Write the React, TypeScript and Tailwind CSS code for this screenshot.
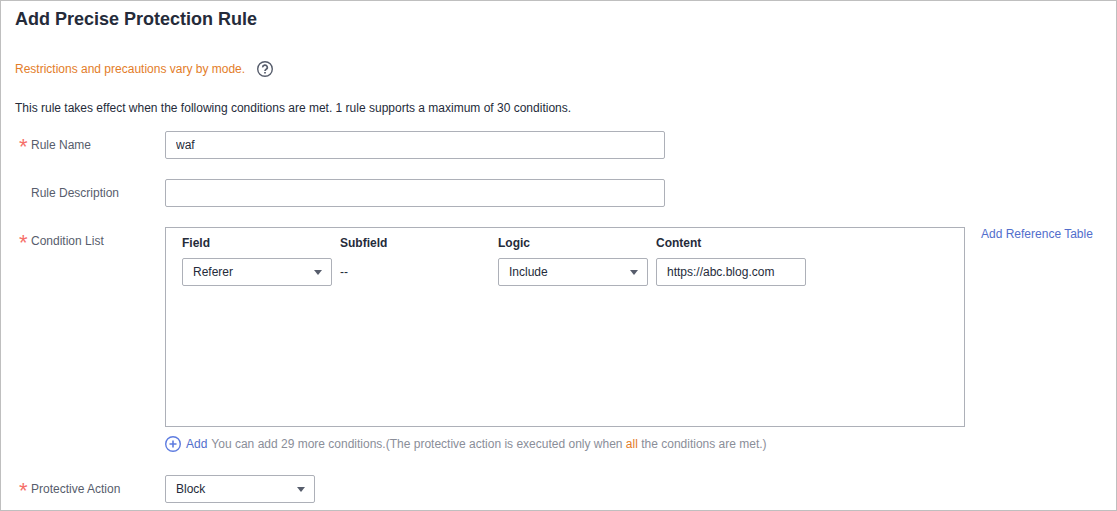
import { useState } from "react";
import type { ReactNode } from "react";

const inputClass =
    "block h-7 w-full rounded-xs border border-[#adb0b8] bg-white px-[10px] text-xs text-[#252b3a] outline-none focus:border-[#526ecc]";

function Row({ label, htmlFor, required, children }: { label: string; htmlFor: string; required?: boolean; children: ReactNode }) {
    return (
        <div className="flex items-start">
            <div className="flex h-7 w-[150px] shrink-0 pl-1 text-[#575d6c]">
                <span className="w-3 text-[22px] leading-8 text-[#f66f6a]">{required ? "*" : ""}</span>
                <label htmlFor={htmlFor} className="leading-7">{label}</label>
            </div>
            {children}
        </div>
    );
}

function Select({ id, label, value, options, onChange }: { id: string; label?: string; value: string; options: string[]; onChange: (v: string) => void }) {
    return (
        <div className="relative w-[150px]">
            <select
                id={id}
                aria-label={label}
                value={value}
                onChange={(e) => onChange(e.target.value)}
                className={`${inputClass} appearance-none`}
            >
                {options.map((o) => (
                    <option key={o}>{o}</option>
                ))}
            </select>
            <svg className="pointer-events-none absolute top-3 right-[10px] h-[5px] w-2" viewBox="0 0 8 5">
                <path d="M0 0h8L4 5z" fill="#575d6c" />
            </svg>
        </div>
    );
}

export default function App() {
    const [name, setName] = useState("waf");
    const [description, setDescription] = useState("");
    const [field, setField] = useState("Referer");
    const [logic, setLogic] = useState("Include");
    const [content, setContent] = useState("https://abc.blog.com");
    const [action, setAction] = useState("Block");

    return (
        <div className="min-h-screen border border-[#bfbfbf] bg-white pr-[22px] pb-[7px] pl-[14px] font-['Liberation_Sans',Arial,sans-serif] text-xs text-[#252b3a]">
            <h1 className="text-lg leading-9 font-bold">Add Precise Protection Rule</h1>

            <div className="mt-6 flex items-center gap-3 leading-4">
                <span className="text-[#e37d29]">Restrictions and precautions vary by mode.</span>
                <button type="button" aria-label="Help">
                    <svg className="size-4" viewBox="0 0 16 16" fill="none" stroke="#575d6c">
                        <circle cx="8" cy="8" r="7.3" strokeWidth="1.4" />
                        <path d="M5.7 6.4a2.3 2.2 0 1 1 3.5 1.8C8.3 8.8 8 9.1 8 9.9" strokeWidth="1.7" />
                        <path d="M8 10.9v1.6" strokeWidth="1.7" />
                    </svg>
                </button>
            </div>

            <p className="mt-[23px] leading-4">
                This rule takes effect when the following conditions are met. 1 rule supports a maximum of 30 conditions.
            </p>

            <form className="mt-[15px] flex flex-col gap-5" onSubmit={(e) => e.preventDefault()}>
                <Row label="Rule Name" htmlFor="name" required>
                    <div className="max-w-[500px] flex-1">
                        <input id="name" className={inputClass} value={name} onChange={(e) => setName(e.target.value)} />
                    </div>
                </Row>

                <Row label="Rule Description" htmlFor="description">
                    <div className="max-w-[500px] flex-1">
                        <input id="description" className={inputClass} value={description} onChange={(e) => setDescription(e.target.value)} />
                    </div>
                </Row>

                {/* CONDITIONS */}
                <Row label="Condition List" htmlFor="field" required>
                    <div className="max-w-[800px] min-w-0 flex-1">
                        <div className="min-h-[200px] border border-[#adb0b8] px-4">
                            <table className="text-left">
                                <thead>
                                    <tr className="h-[30px]">
                                        <th className="w-[158px] p-0">Field</th>
                                        <th className="w-[158px] p-0">Subfield</th>
                                        <th className="w-[158px] p-0">Logic</th>
                                        <th className="w-[158px] p-0">Content</th>
                                    </tr>
                                </thead>
                                <tbody>
                                    <tr>
                                        <td className="p-0 pr-2">
                                            <Select id="field" value={field} options={["Path", "Referer", "User Agent", "IP"]} onChange={setField} />
                                        </td>
                                        <td className="p-0">--</td>
                                        <td className="p-0 pr-2">
                                            <Select id="logic" label="Logic" value={logic} options={["Include", "Exclude", "Equal to"]} onChange={setLogic} />
                                        </td>
                                        <td className="p-0 pr-2">
                                            <input aria-label="Content" className={inputClass} value={content} onChange={(e) => setContent(e.target.value)} />
                                        </td>
                                    </tr>
                                </tbody>
                            </table>
                        </div>
                        <div className="mt-[9px] mb-[3px] flex items-center gap-1 leading-4 text-[#8a8e99]">
                            <button type="button" className="flex items-center gap-[5px] text-[#526ecc]">
                                <svg className="size-4" viewBox="0 0 16 16" fill="none" stroke="#5e7ce0">
                                    <circle cx="8" cy="8" r="7.3" strokeWidth="1.4" />
                                    <path d="M4.5 8h7M8 4.5v7" strokeWidth="1.6" />
                                </svg>
                                Add
                            </button>
                            <span>
                                You can add 29 more conditions.(The protective action is executed only when <span className="text-[#e37d29]">all</span> the conditions are met.)
                            </span>
                        </div>
                    </div>
                    <a href="#reference" className="ml-4 leading-[14px] whitespace-nowrap text-[#526ecc]">Add Reference Table</a>
                </Row>

                <Row label="Protective Action" htmlFor="action" required>
                    <Select id="action" value={action} options={["Block", "Allow", "Log only"]} onChange={setAction} />
                </Row>
            </form>
        </div>
    );
}
